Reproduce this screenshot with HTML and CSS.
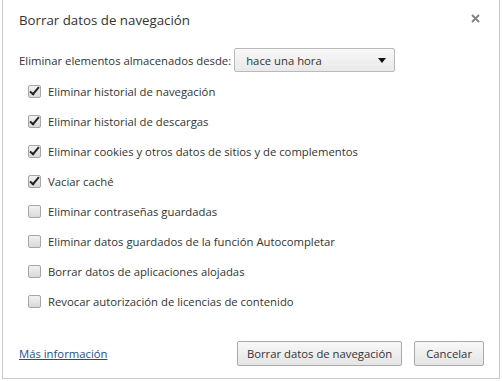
FILE: index.html
```html
<!DOCTYPE html>
<html lang="es">
<head>
    <meta charset="UTF-8">
    <title>Borrar datos de navegación</title>
    <link rel="stylesheet" href="styles.css">
</head>
<body>
    <div class="dialog">
        <div class="header">
            <h1>Borrar datos de navegación</h1>
            <span class="close">
                <svg width="9" height="9" viewBox="0 0 9 9"><path d="M1 1 L8 8 M8 1 L1 8" stroke="#808080" stroke-width="1.8"/></svg>
            </span>
        </div>

        <div class="range-row">
            <span>Eliminar elementos almacenados desde:</span>
            <div class="select">
                <span>hace una hora</span>
                <svg width="8" height="5" viewBox="0 0 8 5"><path d="M0 0 H8 L4 5 Z" fill="#111"/></svg>
            </div>
        </div>

        <ul class="options">
            <li><span class="box checked"></span>Eliminar historial de navegación</li>
            <li><span class="box checked"></span>Eliminar historial de descargas</li>
            <li><span class="box checked"></span>Eliminar cookies y otros datos de sitios y de complementos</li>
            <li><span class="box checked"></span>Vaciar caché</li>
            <li><span class="box"></span>Eliminar contraseñas guardadas</li>
            <li><span class="box"></span>Eliminar datos guardados de la función Autocompletar</li>
            <li><span class="box"></span>Borrar datos de aplicaciones alojadas</li>
            <li><span class="box"></span>Revocar autorización de licencias de contenido</li>
        </ul>

        <div class="footer">
            <a href="#" class="more">Más información</a>
            <div class="buttons">
                <button class="primary">Borrar datos de navegación</button>
                <button>Cancelar</button>
            </div>
        </div>
    </div>
</body>
</html>
```

FILE: styles.css
```css
body {
    margin: 0;
    background: #ffffff;
    font-family: 'Open Sans', 'Noto Sans', sans-serif;
    font-size: 11.3px;
    color: #333333;
}

.dialog {
    width: 498px;
    height: 379px;
    margin-left: 2px;
    box-sizing: border-box;
    border: 1px solid #c9c9c9;
    border-top: none;
    padding: 0 16px 0 16px;
    display: flex;
    flex-direction: column;
}

.header {
    display: flex;
    justify-content: space-between;
    align-items: flex-start;
    height: 47px;
}

h1 {
    margin: 11px 0 0 0;
    font-size: 13.3px;
    font-weight: normal;
    color: #333333;
}

.close {
    margin-top: 11px;
    margin-right: 3px;
}

.range-row {
    display: flex;
    align-items: center;
    height: 26px;
}

.select {
    margin-left: 3px;
    width: 161px;
    height: 24px;
    box-sizing: border-box;
    border: 1px solid #b9b9b9;
    border-radius: 2px;
    background: linear-gradient(#f8f8f8, #e9e9e9);
    display: flex;
    align-items: center;
    justify-content: space-between;
    padding: 0 8px 0 11px;
}

.options {
    list-style: none;
    margin: 3px 0 0 0;
    padding: 0 0 0 9px;
}

.options li {
    height: 30px;
    display: flex;
    align-items: center;
}

.box {
    width: 13px;
    height: 13px;
    box-sizing: border-box;
    border: 1px solid #a6a6a6;
    border-radius: 2px;
    background: linear-gradient(#f2f2f2, #d9d9d9);
    margin-right: 7px;
    position: relative;
}

.box.checked::after {
    content: "";
    position: absolute;
    left: 3px;
    top: -1px;
    width: 3px;
    height: 8px;
    border: solid #222222;
    border-width: 0 2.5px 2.5px 0;
    transform: rotate(40deg);
}

.footer {
    margin-top: auto;
    margin-bottom: 12px;
    display: flex;
    justify-content: space-between;
    align-items: center;
}

.more {
    color: #1b4f98;
    text-decoration: underline;
}

.buttons {
    display: flex;
    gap: 12px;
    margin-right: -1px;
}

button {
    font-family: inherit;
    font-size: 11.3px;
    color: #333333;
    height: 25px;
    padding: 0 11px;
    border: 1px solid #a9a9a9;
    border-radius: 2px;
    background: linear-gradient(#f8f8f8, #e4e4e4);
}

button.primary {
    padding: 0 9px;
}
```
